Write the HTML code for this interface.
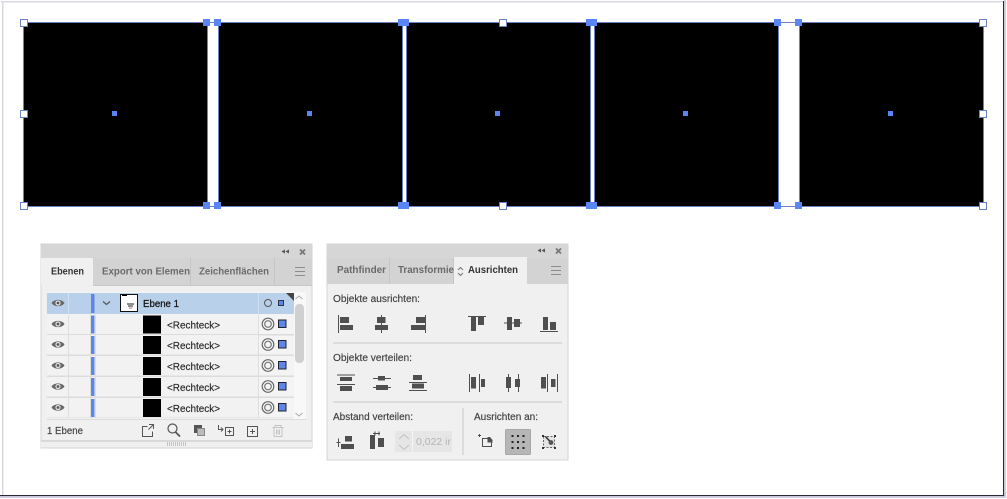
<!DOCTYPE html>
<html><head><meta charset="utf-8"><style>
html,body{margin:0;padding:0;background:#fff;width:1007px;height:499px;overflow:hidden}
svg{display:block}
text{font-family:"Liberation Sans",sans-serif;font-size:10px;fill:#333;stroke:#333;stroke-width:.15}
.b{font-weight:bold;stroke:none}
.t{font-weight:bold;fill:#6a6a6a;stroke:none}
</style></head><body>
<svg width="1007" height="499" viewBox="0 0 1007 499" xmlns="http://www.w3.org/2000/svg">
<defs>
<g id="eye"><path d="M-6.500 0C-4-4.200 4-4.200 6.500 0C4 4.200-4 4.200-6.500 0Z" fill="#686868"/><circle r="2.600" fill="#e4e4e4"/><circle r="1.400" fill="#555"/></g>
<g id="row">
<rect x="47" y="0" width="211" height="21" fill="#f2f2f2"/>
<rect x="47" y="19.500" width="247" height="1.500" fill="#dcdcdc"/>
<path d="M68.500 0V20M90.500 0V20M95.500 0V20M258.500 0V20" stroke="#dedede"/>
<use href="#eye" x="58" y="9.500"/>
<rect x="91" y="1" width="3.500" height="18" fill="#5d86e6"/>
<rect x="143" y="1" width="18" height="18" fill="#000"/>
<text x="167" y="14" textLength="53" lengthAdjust="spacingAndGlyphs" style="fill:#222">&lt;Rechteck&gt;</text>
<circle cx="268" cy="9.500" r="5.800" fill="none" stroke="#6a6a6a" stroke-width="1.200"/><circle cx="268" cy="9.500" r="3.300" fill="none" stroke="#777" stroke-width="1.200"/>
<rect x="278.500" y="5.500" width="7.500" height="7.500" fill="#5d86e6" stroke="#223" stroke-width="1"/>
</g>
</defs>

<!-- window frame -->
<rect width="1007" height="499" fill="#fff"/>
<rect x="1" y="1" width="1004" height="1.500" fill="#d8d8e4"/>
<rect x="2" y="1" width="1.500" height="495" fill="#d8d8e4"/>
<rect x="0" y="495" width="1005" height="1.200" fill="#2a2a3a"/>
<rect x="1003" y="1" width="1.200" height="495" fill="#2a2a3a"/>
<rect x="0" y="496.200" width="1006" height="1.800" fill="#d0d0e4"/>
<rect x="1004.200" y="0" width="1.800" height="498" fill="#d0d0e4"/>

<!-- black squares -->
<g fill="#000" stroke="#6a82c4" stroke-width="1">
<rect x="23.500" y="22.500" width="184" height="184"/>
<rect x="218.500" y="22.500" width="184" height="184"/>
<rect x="406.500" y="22.500" width="184" height="184"/>
<rect x="594.500" y="22.500" width="184" height="184"/>
<rect x="799.500" y="22.500" width="184" height="184"/>
</g>
<path d="M207 22.500H219M402 22.500H407M590 22.500H595M778 22.500H800M207 206.500H219M402 206.500H407M590 206.500H595M778 206.500H800" stroke="#6a82c4" fill="none"/>
<!-- centres -->
<g fill="#5a86f5">
<rect x="112" y="111" width="5" height="5"/><rect x="307" y="111" width="5" height="5"/><rect x="495" y="111" width="5" height="5"/><rect x="683" y="111" width="5" height="5"/><rect x="888" y="111" width="5" height="5"/>
<!-- filled handles -->
<rect x="203" y="19" width="7" height="7"/><rect x="214" y="19" width="7" height="7"/>
<rect x="398" y="19" width="11" height="7"/><rect x="586" y="19" width="11" height="7"/>
<rect x="774" y="19" width="7" height="7"/><rect x="795" y="19" width="7" height="7"/>
<rect x="203" y="202" width="7" height="7"/><rect x="214" y="202" width="7" height="7"/>
<rect x="398" y="202" width="11" height="7"/><rect x="586" y="202" width="11" height="7"/>
<rect x="774" y="202" width="7" height="7"/><rect x="795" y="202" width="7" height="7"/>
</g>
<!-- white handles -->
<g fill="#fff" stroke="#6a82c4">
<rect x="20.500" y="19.500" width="7" height="7"/><rect x="20.500" y="110.500" width="7" height="7"/><rect x="20.500" y="202.500" width="7" height="7"/>
<rect x="499.500" y="19.500" width="7" height="7"/><rect x="499.500" y="202.500" width="7" height="7"/>
<rect x="979.500" y="19.500" width="7" height="7"/><rect x="979.500" y="110.500" width="7" height="7"/><rect x="979.500" y="202.500" width="7" height="7"/>
</g>

<!-- LEFT PANEL -->
<rect x="41" y="244" width="271" height="204" fill="#f0f0f0" stroke="#d4d4d4" stroke-width="1"/>
<rect x="41" y="244.500" width="271" height="13.500" fill="#d6d6d6"/>
<rect x="41" y="258" width="271" height="27" fill="#d3d3d3"/>
<rect x="41" y="258" width="52" height="27" fill="#f0f0f0"/>
<path d="M190.500 258V285M274.500 258V285" stroke="#c6c6c6"/>
<rect x="93" y="285" width="219" height="1" fill="#c8c8c8"/>
<text x="51" y="274.500" textLength="33" lengthAdjust="spacingAndGlyphs" class="b" style="fill:#333">Ebenen</text>
<text x="102" y="274.500" textLength="88" lengthAdjust="spacingAndGlyphs" class="t">Export von Elemen</text>
<text x="199" y="274.500" textLength="70" lengthAdjust="spacingAndGlyphs" class="t">Zeichenflächen</text>
<path d="M295 267.500H305M295 271.500H305M295 275.500H305" stroke="#8c8c8c"/>
<!-- collapse/close -->
<path d="M285 249.500L281.500 251.500L285 253.500ZM289 249.500L285.500 251.500L289 253.500Z" fill="#555"/>
<path d="M300 249.500L305 254.500M305 249.500L300 254.500" stroke="#777" stroke-width="1.800"/>
<!-- list -->
<rect x="47" y="292" width="259" height="127" fill="#f4f4f4"/>
<rect x="47" y="293" width="247" height="21" fill="#b8d0ea"/>
<path d="M68.500 293V314M258.500 293V314" stroke="#cfe0f2"/>
<use href="#eye" x="58" y="303"/>
<rect x="91" y="294" width="3.500" height="19" fill="#5d86e6"/>
<path d="M103 301.500L106.500 304.500L110 301.500" fill="none" stroke="#555" stroke-width="1.200"/>
<rect x="120.500" y="294.500" width="17" height="17" fill="#fff" stroke="#111"/>
<rect x="122" y="295" width="5" height="1" fill="#000"/><path d="M127 304H134M128 306H133" stroke="#222"/>
<path d="M129 308H132" stroke="#c66"/>
<text x="143" y="307" textLength="36" lengthAdjust="spacingAndGlyphs" style="fill:#111;stroke:#111;stroke-width:.25">Ebene 1</text>
<circle cx="268" cy="303" r="3.500" fill="none" stroke="#555"/>
<rect x="278.500" y="300.500" width="5" height="5" fill="#5d86e6" stroke="#334"/>
<path d="M286 293H294V301Z" fill="#444"/>
<use href="#row" y="314.500"/>
<use href="#row" y="335"/>
<use href="#row" y="356"/>
<use href="#row" y="377"/>
<use href="#row" y="398"/>
<rect x="47" y="418" width="259" height="3" fill="#f0f0f0"/>
<!-- scrollbar -->
<rect x="294" y="292" width="12" height="127" fill="#f8f8f8"/>
<rect x="295" y="304" width="9" height="59" rx="4" fill="#d0d0d0"/>
<path d="M295.500 299L299 296L302.500 299M295.500 413L299 416L302.500 413" fill="none" stroke="#aaa"/>
<rect x="47" y="419" width="259" height="1" fill="#dcdcdc"/>
<!-- footer -->
<text x="47" y="434" textLength="36" lengthAdjust="spacingAndGlyphs" style="fill:#444">1 Ebene</text>
<g fill="none" stroke="#555" stroke-width="1">
<path d="M147.500 426.500H142.500V436.500H152.500V431.500M149 424.500H153.500V429M153.500 424.500L148.500 429.500"/>
<circle cx="172.500" cy="428.500" r="4.500" stroke-width="1.200"/><path d="M175.500 432L180 436.500" stroke-width="1.800"/>
<rect x="194.500" y="425.500" width="7" height="7" fill="#555"/><rect x="197.500" y="428.500" width="7" height="7" fill="#bbb" stroke="#888"/>
<path d="M218.500 425V429.500H223M221 427.500L223 429.500L221 431.500"/><rect x="225.500" y="427.500" width="8" height="8"/><path d="M227.500 431.500H231.500M229.500 429.500V433.500"/>
<rect x="247.500" y="426.500" width="10" height="10"/><path d="M250 431.500H255M252.500 429V434"/>
<g stroke="#c4c4c4"><path d="M272.500 427.500H283.500M275 427V425.500H281V427M274 428V436.500H282V428M276.500 429.500V434.500M278 429.500V434.500M279.500 429.500V434.500"/></g>
</g>
<rect x="41" y="440" width="271" height="2" fill="#d8d8d8"/>
<rect x="41" y="442" width="271" height="5.500" fill="#f0f0f0"/>
<path d="M167.500 442V446M169.500 442V446M171.500 442V446M173.500 442V446M175.500 442V446M177.500 442V446M179.500 442V446M181.500 442V446M183.500 442V446M185.500 442V446" stroke="#c4c4c4"/>

<!-- RIGHT PANEL -->
<rect x="327" y="244" width="241" height="216" fill="#f0f0f0" stroke="#d4d4d4" stroke-width="1"/>
<rect x="327" y="244.500" width="241" height="13.500" fill="#d6d6d6"/>
<rect x="327" y="258" width="241" height="26" fill="#d3d3d3"/>
<rect x="454" y="257" width="73" height="27" fill="#f0f0f0"/>
<path d="M389.500 258V284M453.500 258V284" stroke="#c6c6c6"/>
<text x="337" y="273" textLength="49" lengthAdjust="spacingAndGlyphs" class="t">Pathfinder</text>
<text x="398" y="273" textLength="56" lengthAdjust="spacingAndGlyphs" class="t">Transformie</text>
<path d="M458 270L460.500 267.500L463 270M458 273L460.500 275.500L463 273" fill="none" stroke="#777"/>
<text x="468" y="273" textLength="50" lengthAdjust="spacingAndGlyphs" class="b" style="fill:#333">Ausrichten</text>
<path d="M551 266.500H561M551 270.500H561M551 274.500H561" stroke="#8c8c8c"/>
<path d="M541 248.500L537.500 250.500L541 252.500ZM545 248.500L541.500 250.500L545 252.500Z" fill="#555"/>
<path d="M556 248.500L561 253.500M561 248.500L556 253.500" stroke="#777" stroke-width="1.800"/>

<text x="333" y="302" textLength="87" lengthAdjust="spacingAndGlyphs" style="fill:#444">Objekte ausrichten:</text>
<!-- align row -->
<g fill="#4f4f4f">
<rect x="338" y="315" width="1" height="18"/><rect x="340" y="317" width="9" height="6"/><rect x="340" y="325" width="13" height="5"/>
<rect x="381" y="315" width="1" height="18"/><rect x="377" y="317" width="8.500" height="6"/><rect x="375" y="325" width="13" height="5"/>
<rect x="425" y="315" width="1" height="18"/><rect x="416" y="317" width="9" height="6"/><rect x="411" y="325" width="14" height="5"/>
<rect x="468" y="316" width="18" height="1"/><rect x="471" y="317" width="5" height="14"/><rect x="478" y="317" width="6" height="8"/>
<rect x="504" y="322.500" width="18" height="1"/><rect x="507" y="317" width="5" height="13"/><rect x="514" y="319" width="6" height="8"/>
<rect x="540" y="331" width="18" height="1"/><rect x="543" y="317" width="5" height="13"/><rect x="550" y="322" width="6" height="8"/>
</g>
<rect x="333" y="342" width="229" height="2" fill="#dcdcdc"/>
<text x="333" y="361" textLength="79" lengthAdjust="spacingAndGlyphs" style="fill:#444">Objekte verteilen:</text>
<g fill="#4f4f4f">
<rect x="337" y="374.500" width="18" height="1"/><rect x="340" y="377" width="12" height="4"/><rect x="337" y="384" width="18" height="1"/><rect x="340" y="386" width="12" height="5"/>
<rect x="373" y="378" width="18" height="1"/><rect x="378" y="376" width="7" height="4.500"/><rect x="373" y="387" width="18" height="1"/><rect x="376" y="385" width="12" height="5"/>
<rect x="413" y="375" width="9" height="5"/><rect x="409" y="382" width="18" height="1"/><rect x="412" y="383.500" width="12" height="5"/><rect x="409" y="390" width="18" height="1"/>
<rect x="469" y="374" width="1" height="18"/><rect x="471" y="377" width="5" height="11.500"/><rect x="479" y="374" width="1" height="18"/><rect x="481" y="379" width="4" height="8"/>
<rect x="508" y="374" width="1" height="18"/><rect x="506" y="377" width="5" height="11"/><rect x="518" y="374" width="1" height="18"/><rect x="515" y="379" width="5" height="8"/>
<rect x="547" y="374" width="1" height="18"/><rect x="541" y="377" width="5" height="11.500"/><rect x="557" y="374" width="1" height="18"/><rect x="551" y="379" width="4.500" height="8"/>
</g>
<rect x="333" y="401" width="229" height="2" fill="#dcdcdc"/>
<rect x="462" y="408" width="2" height="47" fill="#dcdcdc"/>
<text x="333" y="420" textLength="80" lengthAdjust="spacingAndGlyphs" style="fill:#444">Abstand verteilen:</text>
<text x="474" y="420" textLength="64" lengthAdjust="spacingAndGlyphs" style="fill:#444">Ausrichten an:</text>
<g fill="#4f4f4f">
<path d="M338 438.500H339V447H338ZM336.500 442H340.500V443H336.500Z"/>
<rect x="345" y="436" width="7" height="5.500"/><rect x="341" y="444" width="13" height="5"/>
<rect x="370" y="435" width="5" height="14"/><rect x="378" y="438" width="6" height="9"/>
<path d="M373 433H380V434H373ZM374.500 431.500H375.500V435.500H374.500ZM378.500 431.500H379.500V435.500H378.500Z"/>
</g>
<rect x="395" y="431" width="57" height="21" fill="#e6e6e6"/>
<path d="M412.500 431V452" stroke="#f4f4f4"/>
<path d="M399 439L404 434.500L409 439M399 445L404 449.500L409 445" fill="none" stroke="#c8c8c8" stroke-width="1.200"/>
<text x="416" y="445" textLength="35" lengthAdjust="spacingAndGlyphs" style="fill:#b4b4b4;stroke:none">0,022 ir</text>
<g fill="none" stroke="#4f4f4f">
<path d="M482.500 438.500H488.500L491.500 441.500V446.500H482.500Z"/>
<path d="M478 435.500H481M479.500 434V437" stroke-width="1"/>
<path d="M487.500 437H490L492.500 440V442.500H487.500Z" fill="#4f4f4f" stroke="none"/>
</g>
<rect x="505.500" y="429.500" width="25" height="25" rx="1" fill="#b6b6b6" stroke="#a8a8a8"/>
<g fill="#222">
<rect x="511.500" y="435" width="2" height="2"/><rect x="517" y="435" width="2" height="2"/><rect x="522.500" y="435" width="2" height="2"/>
<rect x="511.500" y="441" width="2" height="2"/><rect x="517" y="441" width="2" height="2"/><rect x="522.500" y="441" width="2" height="2"/>
<rect x="511.500" y="447" width="2" height="2"/><rect x="517" y="447" width="2" height="2"/><rect x="522.500" y="447" width="2" height="2"/>
</g>
<g>
<rect x="543.500" y="436.500" width="11" height="11" fill="#e4e4e4" stroke="#666" stroke-dasharray="2 1.500"/>
<g fill="#333"><rect x="542" y="435" width="2" height="2"/><rect x="554" y="435" width="2" height="2"/><rect x="542" y="447" width="2" height="2"/><rect x="554" y="447" width="2" height="2"/></g>
<path d="M545.500 436.500L550 441.500" stroke="#333" stroke-width="1.600"/><circle cx="551" cy="442.500" r="2.400" fill="#555"/>
</g>
</svg>
</body></html>
